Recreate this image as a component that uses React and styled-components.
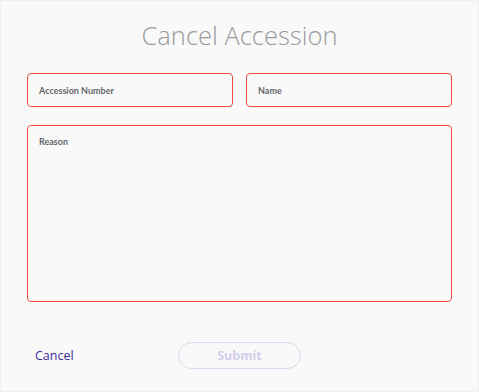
import React from "react";
import styled, { createGlobalStyle } from "styled-components";

const Global = createGlobalStyle`
  html, body { margin: 0; padding: 0; }
  body { background: #f9f9fa; font-family: "Open Sans", "Noto Sans", sans-serif; }
  * { box-sizing: border-box; }
`;

const Page = styled.div`
  width: 479px;
  height: 392px;
  border: 1px solid #f0f0f2;
  background: #f9f9fa;
  padding: 0 26px;
  display: flex;
  flex-direction: column;
`;

const Title = styled.h1`
  margin: 14px 0 0;
  height: 40px;
  font-family: "Open Sans", sans-serif;
  font-weight: 300;
  font-size: 25.5px;
  line-height: 40px;
  color: #9a9a9a;
  text-align: center;
`;

const Row = styled.div`
  display: grid;
  grid-template-columns: 1fr 1fr;
  gap: 13px;
  margin-top: 18px;
`;

const Field = styled.div`
  height: ${(p) => p.$h}px;
  border: 1.5px solid #f04c44;
  border-radius: 4px;
  padding: ${(p) => (p.$area ? "10px 11px" : "0 11px")};
  display: flex;
  align-items: ${(p) => (p.$area ? "flex-start" : "center")};
  font-family: Lato, "Open Sans", sans-serif;
  font-weight: 700;
  font-size: 9px;
  color: #666666;
`;

const AreaWrap = styled.div`
  margin-top: 18px;
`;

const Footer = styled.div`
  display: flex;
  align-items: center;
  margin-top: 40px;
  padding-left: 8px;
`;

const CancelLink = styled.span`
  font-family: "Open Sans", sans-serif;
  font-size: 12.5px;
  color: #3d2b98;
  width: 143px;
`;

const SubmitButton = styled.button`
  width: 123px;
  height: 27px;
  border: 1px solid #dcd8ef;
  border-radius: 14px;
  background: transparent;
  font-family: "Open Sans", sans-serif;
  font-weight: 700;
  font-size: 12.5px;
  color: #d3cdea;
  padding: 0;
`;

export default function App() {
  return (
    <>
      <Global />
      <Page>
        <Title>Cancel Accession</Title>
        <Row>
          <Field $h={34}>Accession Number</Field>
          <Field $h={34}>Name</Field>
        </Row>
        <AreaWrap>
          <Field $h={177} $area>Reason</Field>
        </AreaWrap>
        <Footer>
          <CancelLink>Cancel</CancelLink>
          <SubmitButton disabled>Submit</SubmitButton>
        </Footer>
      </Page>
    </>
  );
}
